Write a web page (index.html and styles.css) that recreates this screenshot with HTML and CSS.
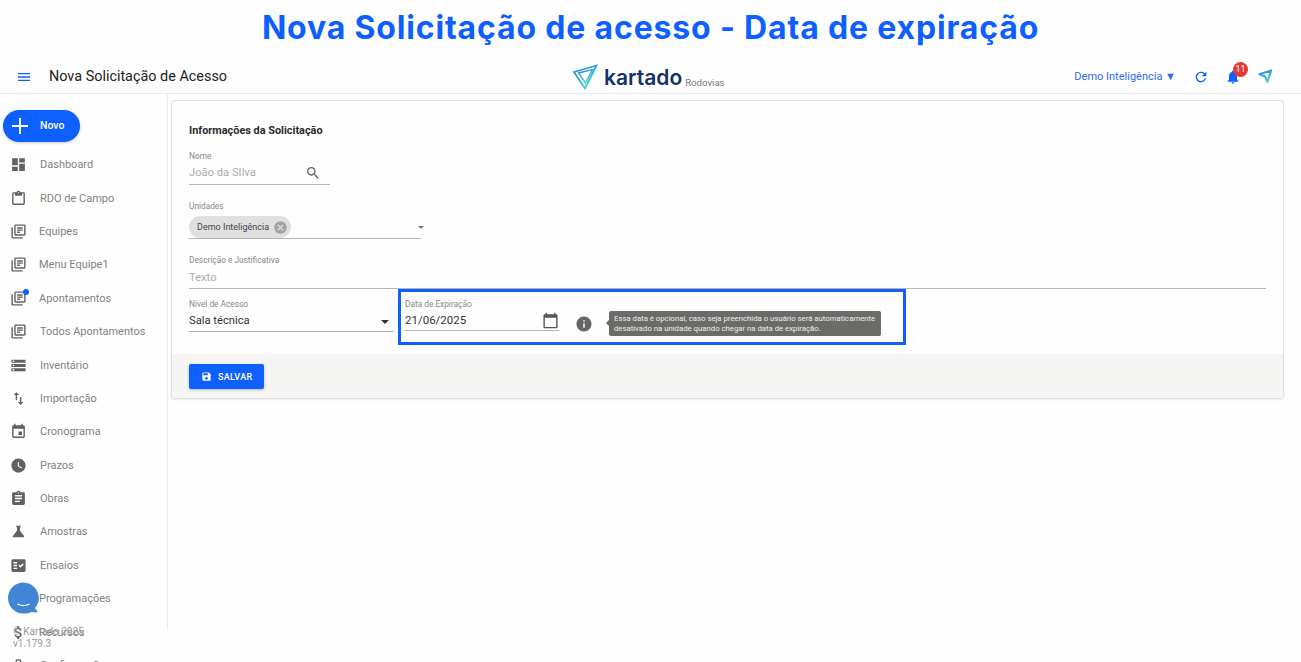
FILE: index.html
```html
<!DOCTYPE html>
<html lang="pt-BR">
<head>
  <meta charset="UTF-8">
  <meta name="viewport" content="width=device-width, initial-scale=1.0">
  <title>Nova Solicitação de Acesso</title>
  <link rel="stylesheet" href="styles.css">
</head>
<body>
  <svg class="sprite" xmlns="http://www.w3.org/2000/svg">
    <symbol id="i-menu" viewBox="0 0 24 24"><path d="M3 18h18v-2H3v2zm0-5h18v-2H3v2zm0-7v2h18V6H3z"/></symbol>
    <symbol id="i-dash" viewBox="0 0 24 24"><path d="M3 13h8V3H3v10zm0 8h8v-6H3v6zm10 0h8V11h-8v10zm0-18v6h8V3h-8z"/></symbol>
    <symbol id="i-clip" viewBox="0 0 24 24"><path d="M19 3h-4.18C14.4 1.84 13.3 1 12 1s-2.4.84-2.82 2H5c-1.1 0-2 .9-2 2v14c0 1.1.9 2 2 2h14c1.1 0 2-.9 2-2V5c0-1.1-.9-2-2-2zm-7 0c.55 0 1 .45 1 1s-.45 1-1 1-1-.45-1-1 .45-1 1-1zm7 16H5V5h2v3h10V5h2v14z"/></symbol>
    <symbol id="i-books" viewBox="0 0 24 24"><path d="M4 6H2v14c0 1.1.9 2 2 2h14v-2H4V6zm16-4H8c-1.1 0-2 .9-2 2v12c0 1.1.9 2 2 2h12c1.1 0 2-.9 2-2V4c0-1.1-.9-2-2-2zm0 14H8V4h12v12zM10 9h8v2h-8zm0 3h4v2h-4zm0-6h8v2h-8z"/></symbol>
    <symbol id="i-list" viewBox="0 0 24 24"><path d="M2 20h20v-4H2v4zm2-3h2v2H4v-2zM2 4v4h20V4H2zm4 3H4V5h2v2zm-4 7h20v-4H2v4zm2-3h2v2H4v-2z"/></symbol>
    <symbol id="i-import" viewBox="0 0 24 24"><path d="M9 3L5 6.99h3V14h2V6.99h3L9 3zm7 14.01V10h-2v7.01h-3L15 21l4-3.99h-3z"/></symbol>
    <symbol id="i-event" viewBox="0 0 24 24"><path d="M17 12h-5v5h5v-5zM16 1v2H8V1H6v2H5c-1.11 0-1.99.9-1.99 2L3 19c0 1.1.89 2 2 2h14c1.1 0 2-.9 2-2V5c0-1.1-.9-2-2-2h-1V1h-2zm3 18H5V8h14v11z"/></symbol>
    <symbol id="i-clock" viewBox="0 0 24 24"><path d="M12 2C6.5 2 2 6.5 2 12s4.5 10 10 10 10-4.5 10-10S17.5 2 12 2zm4.2 14.2L11 13V7h1.5v5.2l4.5 2.7-.8 1.3z"/></symbol>
    <symbol id="i-assign" viewBox="0 0 24 24"><path d="M19 3h-4.18C14.4 1.84 13.3 1 12 1c-1.3 0-2.4.84-2.82 2H5c-1.1 0-2 .9-2 2v14c0 1.1.9 2 2 2h14c1.1 0 2-.9 2-2V5c0-1.1-.9-2-2-2zm-7 0c.55 0 1 .45 1 1s-.45 1-1 1-1-.45-1-1 .45-1 1-1zm2 14H7v-2h7v2zm3-4H7v-2h10v2zm0-4H7V7h10v2z"/></symbol>
    <symbol id="i-flask" viewBox="0 0 24 24"><path d="M19.8 18.4L14 10.67V6.5l1.35-1.69c.26-.33.03-.81-.39-.81H9.04c-.42 0-.65.48-.39.81L10 6.5v4.17L4.2 18.4c-.49.66-.02 1.6.8 1.6h14c.82 0 1.29-.94.8-1.6z"/></symbol>
    <symbol id="i-check" viewBox="0 0 24 24"><path d="M20 3H4c-1.1 0-2 .9-2 2v14c0 1.1.9 2 2 2h16c1.1 0 2-.9 2-2V5c0-1.1-.9-2-2-2zM10 17H5v-2h5v2zm0-4H5v-2h5v2zm0-4H5V7h5v2zm4.82 6L12 12.16l1.41-1.41 1.41 1.42L17.99 9l1.42 1.42L14.82 15z"/></symbol>
    <symbol id="i-money" viewBox="0 0 24 24"><path d="M11.8 10.9c-2.27-.59-3-1.2-3-2.15 0-1.09 1.01-1.85 2.7-1.85 1.78 0 2.44.85 2.5 2.1h2.21c-.07-1.72-1.12-3.3-3.21-3.81V3h-3v2.16c-1.94.42-3.5 1.68-3.5 3.61 0 2.31 1.91 3.46 4.7 4.13 2.5.6 3 1.48 3 2.41 0 .69-.49 1.79-2.7 1.79-2.06 0-2.87-.92-2.98-2.1h-2.2c.12 2.19 1.76 3.42 3.68 3.83V21h3v-2.15c1.95-.37 3.5-1.5 3.5-3.55 0-2.84-2.43-3.81-4.7-4.4z"/></symbol>
    <symbol id="i-gear" viewBox="0 0 24 24"><path d="M20 7h-4V5c0-1.1-.9-2-2-2h-4c-1.1 0-2 .9-2 2v2H4c-1.1 0-2 .9-2 2v10c0 1.1.9 2 2 2h16c1.1 0 2-.9 2-2V9c0-1.1-.9-2-2-2zm-6 0h-4V5h4v2z"/></symbol>
  </svg>

  <h1 class="banner">Nova Solicitação de acesso - Data de expiração</h1>

  <header class="topbar">
    <div class="topbar-left">
      <svg class="icon menu-icon"><use href="#i-menu"/></svg>
      <span class="page-title">Nova Solicitação de Acesso</span>
    </div>
    <div class="brand">
      <svg class="brand-mark" viewBox="0 0 26 26" fill="none">
        <defs>
          <linearGradient id="markgrad" x1="0" y1="0" x2="0.6" y2="1">
            <stop offset="0" stop-color="#1f7fe0"/>
            <stop offset="1" stop-color="#45d6cf"/>
          </linearGradient>
        </defs>
        <path d="M2 8 24.500 1.500 13 24.500Z" stroke="url(#markgrad)" stroke-width="1.800"/>
        <path d="M6.500 9 20.500 5.500 13.500 19Z" stroke="url(#markgrad)" stroke-width="1.400"/>
      </svg>
      <span class="brand-name">kartado</span>
      <span class="brand-sub">Rodovias</span>
    </div>
    <div class="topbar-right">
      <span class="unit-select">Demo Inteligência ▼</span>
      <svg class="icon blue" viewBox="0 0 24 24"><path d="M17.650 6.350C16.200 4.900 14.210 4 12 4c-4.420 0-7.990 3.580-7.990 8s3.570 8 7.990 8c3.730 0 6.840-2.550 7.730-6h-2.080c-.82 2.330-3.040 4-5.650 4-3.310 0-6-2.690-6-6s2.690-6 6-6c1.660 0 3.140.69 4.220 1.780L13 11h7V4l-2.350 2.350z"/></svg>
      <div class="bell">
        <svg class="icon blue" viewBox="0 0 24 24"><path d="M12 22c1.100 0 2-.9 2-2h-4c0 1.100.9 2 2 2zm6-6v-5c0-3.070-1.630-5.640-4.500-6.320V4c0-.83-.67-1.500-1.500-1.500s-1.500.67-1.500 1.500v.68C7.640 5.360 6 7.920 6 11v5l-2 2v1h16v-1l-2-2z"/></svg>
        <span class="bell-count">11</span>
      </div>
      <svg class="send-icon" viewBox="0 0 16 16" fill="none"><path d="M1.500 5.500 14 1.500 10 14 7.500 8Z" stroke="url(#markgrad)" stroke-width="2.200" stroke-linejoin="round"/></svg>
    </div>
  </header>

  <div class="app">
    <aside class="sidebar">
      <button class="new-btn">
        <svg class="new-plus" viewBox="0 0 16 16"><path d="M7 0h2v7h7v2H9v7H7V9H0V7h7z"/></svg>
        <span>Novo</span>
      </button>
      <nav class="side-nav">
        <a class="side-item"><svg class="icon"><use href="#i-dash"/></svg><span>Dashboard</span></a>
        <a class="side-item"><svg class="icon"><use href="#i-clip"/></svg><span>RDO de Campo</span></a>
        <a class="side-item tight"><svg class="icon"><use href="#i-books"/></svg><span>Equipes</span></a>
        <a class="side-item tight"><svg class="icon"><use href="#i-books"/></svg><span>Menu Equipe1</span></a>
        <a class="side-item tight"><svg class="icon"><use href="#i-books"/></svg><i class="side-dot"></i><span>Apontamentos</span></a>
        <a class="side-item"><svg class="icon"><use href="#i-books"/></svg><span>Todos Apontamentos</span></a>
        <a class="side-item"><svg class="icon"><use href="#i-list"/></svg><span>Inventário</span></a>
        <a class="side-item"><svg class="icon"><use href="#i-import"/></svg><span>Importação</span></a>
        <a class="side-item"><svg class="icon"><use href="#i-event"/></svg><span>Cronograma</span></a>
        <a class="side-item"><svg class="icon"><use href="#i-clock"/></svg><span>Prazos</span></a>
        <a class="side-item"><svg class="icon"><use href="#i-assign"/></svg><span>Obras</span></a>
        <a class="side-item"><svg class="icon"><use href="#i-flask"/></svg><span>Amostras</span></a>
        <a class="side-item"><svg class="icon"><use href="#i-check"/></svg><span>Ensaios</span></a>
        <a class="side-item tight"><svg class="icon"><use href="#i-books"/></svg><span>Programações</span></a>
        <a class="side-item tight"><svg class="icon"><use href="#i-money"/></svg><span>Recursos</span></a>
        <a class="side-item"><svg class="icon"><use href="#i-gear"/></svg><span>Configurações</span></a>
      </nav>
      <div class="side-footer">
        <div>© Kartado 2025</div>
        <div>v1.179.3</div>
      </div>
      <svg class="chat-bubble" viewBox="0 0 32 33">
        <path d="M15.500 0.500a15.500 15.500 0 1 0 0 31c3 0 6-.5 8-1.500l6.500.5-3-4.500a15.500 15.500 0 0 0-11.500-25.500z" fill="#4285d4"/>
        <path d="M9.500 22c3.500 2 8.500 2 12 0" stroke="#fff" stroke-width="1.200" fill="none"/>
      </svg>
    </aside>

    <main class="content">
      <section class="card">
        <div class="card-body">
          <h2 class="card-title">Informações da Solicitação</h2>

          <div class="field field-name">
            <label class="field-label">Nome</label>
            <div class="field-value muted">
              <span>João da SIlva</span>
              <svg class="icon search-icon" viewBox="0 0 24 24"><path d="M15.500 14h-.79l-.28-.27C15.410 12.590 16 11.110 16 9.500 16 5.910 13.090 3 9.500 3S3 5.910 3 9.500 5.910 16 9.500 16c1.610 0 3.090-.59 4.230-1.570l.27.28v.79l5 4.990L20.490 19l-4.990-5zm-6 0C7.010 14 5 11.990 5 9.500S7.010 5 9.500 5 14 7.010 14 9.500 11.990 14 9.500 14z"/></svg>
            </div>
          </div>

          <div class="field field-units">
            <label class="field-label">Unidades</label>
            <div class="field-value chips">
              <span class="chip">Demo Inteligência
                <svg class="chip-x" viewBox="0 0 24 24"><path d="M12 2C6.470 2 2 6.470 2 12s4.470 10 10 10 10-4.470 10-10S17.530 2 12 2zm5 13.590L15.590 17 12 13.410 8.410 17 7 15.590 10.590 12 7 8.410 8.410 7 12 10.590 15.590 7 17 8.410 13.410 12 17 15.590z"/></svg>
              </span>
              <i class="caret"></i>
            </div>
          </div>

          <div class="field field-desc">
            <label class="field-label">Descrição e Justificativa</label>
            <div class="field-value muted">Texto</div>
          </div>

          <div class="access-row">
            <div class="field field-level">
              <label class="field-label">Nível de Acesso</label>
              <div class="field-value">
                <span>Sala técnica</span>
                <i class="caret dark"></i>
              </div>
            </div>
            <div class="expiry-box">
              <div class="field field-date">
                <label class="field-label">Data de Expiração</label>
                <div class="field-value">
                  <span class="date-text">21/06/2025</span>
                  <svg class="cal-icon" viewBox="0 0 24 24"><path d="M20 3h-1V1h-2v2H7V1H5v2H4c-1.100 0-2 .9-2 2v16c0 1.100.9 2 2 2h16c1.100 0 2-.9 2-2V5c0-1.100-.9-2-2-2zm0 18H4V8h16v13z"/></svg>
                </div>
              </div>
              <svg class="info-icon" viewBox="0 0 24 24"><path d="M12 2C6.480 2 2 6.480 2 12s4.480 10 10 10 10-4.480 10-10S17.520 2 12 2zm1 15h-2v-6h2v6zm0-8h-2V7h2v2z"/></svg>
              <div class="hint">Essa data é opcional, caso seja preenchida o usuário será automaticamente desativado na unidade quando chegar na data de expiração.</div>
            </div>
          </div>
        </div>

        <div class="card-actions">
          <button class="save-btn">
            <svg class="save-icon" viewBox="0 0 24 24"><path d="M17 3H5c-1.110 0-2 .9-2 2v14c0 1.100.89 2 2 2h14c1.100 0 2-.9 2-2V7l-4-4zm-5 16c-1.660 0-3-1.340-3-3s1.340-3 3-3 3 1.340 3 3-1.340 3-3 3zm3-10H5V5h10v4z"/></svg>
            SALVAR
          </button>
        </div>
      </section>
    </main>
  </div>
</body>
</html>
```

FILE: styles.css
```css
html, body {
  height: 100%;
}
body {
  margin: 0;
  font-family: Roboto, "Liberation Sans", sans-serif;
  background-color: #fefefe;
  color: #333;
  overflow: hidden;
}
.sprite {
  display: none;
}
.icon {
  width: 18px;
  height: 18px;
  fill: #616161;
  flex-shrink: 0;
}
.icon.blue {
  fill: #0d5fff;
  width: 16px;
  height: 16px;
}

.banner {
  margin: 0;
  height: 58px;
  padding-bottom: 3px;
  box-sizing: border-box;
  display: flex;
  align-items: center;
  justify-content: center;
  font-family: Inter, sans-serif;
  font-size: 32px;
  font-weight: 700;
  letter-spacing: 0.83px;
  color: #0d5fff;
}

.topbar {
  position: relative;
  height: 36px;
  padding: 2px 28px 0 16px;
  box-sizing: border-box;
  border-bottom: 1px solid #e8e8e8;
  display: flex;
  align-items: center;
  justify-content: space-between;
}
.topbar-left {
  display: flex;
  align-items: center;
  gap: 17px;
}
.menu-icon {
  width: 16px;
  height: 16px;
  fill: #0d5fff;
}
.page-title {
  font-size: 14.400px;
  color: #222;
}
.brand {
  position: absolute;
  left: 572px;
  top: 6px;
  display: flex;
  align-items: flex-end;
  height: 26px;
}
.brand-mark {
  width: 26px;
  height: 26px;
}
.brand-name {
  font-family: Inter, sans-serif;
  font-size: 21px;
  font-weight: 600;
  line-height: 24px;
  color: #14306b;
  margin-left: 6px;
}
.brand-sub {
  font-size: 9.600px;
  color: #777;
  margin-left: 3px;
  line-height: 15px;
}
.topbar-right {
  display: flex;
  align-items: center;
}
.unit-select {
  font-size: 11px;
  color: #2f6cf0;
  margin-right: 17px;
}
.bell {
  position: relative;
  display: flex;
  margin-left: 16px;
  margin-right: 17px;
}
.bell-count {
  position: absolute;
  top: -7px;
  left: 8px;
  width: 15px;
  height: 15px;
  border-radius: 50%;
  background-color: #e53935;
  color: white;
  font-size: 9px;
  text-align: center;
  line-height: 15px;
}
.send-icon {
  width: 15px;
  height: 15px;
}

.app {
  display: flex;
  height: calc(100% - 94px);
}

.sidebar {
  position: relative;
  width: 168px;
  flex-shrink: 0;
  box-sizing: border-box;
  overflow: hidden;
  padding: 16px 0 0 3px;
}
.sidebar::after {
  content: "";
  position: absolute;
  top: 0;
  right: 0;
  height: 536px;
  border-right: 1px solid #e8e8e8;
}
.new-btn {
  display: flex;
  align-items: center;
  gap: 12px;
  width: 77px;
  height: 32px;
  padding: 0 0 2px 9px;
  border: none;
  border-radius: 16px;
  background-color: #0d5fff;
  color: white;
  font-family: inherit;
  font-size: 10.500px;
  font-weight: 500;
  box-shadow: 0 1px 3px rgba(0, 0, 0, 0.2);
}
.new-plus {
  width: 16px;
  height: 16px;
  margin-top: 2px;
  fill: white;
}
.side-nav {
  margin-top: 6px;
}
.side-item {
  position: relative;
  display: flex;
  align-items: center;
  gap: 13px;
  height: 33.400px;
  padding-left: 7px;
  font-size: 11px;
  color: #828282;
  white-space: nowrap;
}
.side-item .icon {
  width: 17px;
  height: 17px;
}
.side-item.tight {
  gap: 12px;
}
.side-dot {
  position: absolute;
  left: 20px;
  top: 7px;
  width: 6px;
  height: 6px;
  border-radius: 50%;
  background-color: #0d5fff;
}
.side-footer {
  position: absolute;
  left: 0;
  top: 532px;
  width: 168px;
  box-sizing: border-box;
  padding-left: 13px;
  font-size: 10px;
  line-height: 12px;
  color: #999;
}
.chat-bubble {
  position: absolute;
  left: 8px;
  top: 488px;
  width: 32px;
  height: 33px;
}

.content {
  flex: 1;
  padding: 6px 17px 0 3px;
}
.card {
  border: 1px solid #e0e0e0;
  border-radius: 3px;
  box-shadow: 0 1px 2px rgba(0, 0, 0, 0.08);
}
.card-body {
  padding: 23px 17px 8px;
  height: 253px;
  box-sizing: border-box;
}
.card-title {
  margin: 0;
  font-size: 10.900px;
  font-weight: 700;
  line-height: 14px;
  color: #2b2b2b;
}
.field-label {
  display: block;
  font-size: 8.300px;
  line-height: 10px;
  color: #888;
}
.field-value {
  display: flex;
  align-items: center;
  justify-content: space-between;
  border-bottom: 1px solid #b5b5b5;
  font-size: 11.200px;
  color: #333;
}
.field-value.muted {
  color: #ababab;
}
.field-name {
  width: 141px;
  margin-top: 13px;
}
.field-name .field-value {
  height: 23px;
  padding-right: 9px;
}
.search-icon {
  width: 16px;
  height: 16px;
}
.field-units {
  width: 232px;
  margin-top: 16px;
}
.field-units .field-value {
  height: 22px;
  padding-top: 5px;
  align-items: flex-start;
}
.chip {
  display: flex;
  align-items: center;
  gap: 4px;
  height: 22px;
  padding: 0 3px 0 8px;
  border-radius: 11px;
  background-color: #e0e0e0;
  font-size: 9px;
  color: #444;
}
.chip-x {
  width: 15px;
  height: 15px;
  fill: #a3a3a3;
}
.caret {
  width: 0;
  height: 0;
  margin: 10px -3px 0 0;
  border-left: 3.500px solid transparent;
  border-right: 3.500px solid transparent;
  border-top: 3.500px solid #777;
}
.caret.dark {
  margin: 4px 5px 0 0;
  border-left-width: 4px;
  border-right-width: 4px;
  border-top: 4px solid #333;
}
.field-desc {
  margin-top: 16px;
}
.field-desc .field-value {
  height: 22px;
  padding-top: 1px;
}
.access-row {
  display: flex;
  gap: 4px;
}
.field-level {
  width: 205px;
  padding-top: 10px;
}
.field-level .field-value {
  height: 22px;
}
.expiry-box {
  display: flex;
  align-items: flex-start;
  width: 508px;
  height: 56px;
  box-sizing: border-box;
  border: 3px solid #0d5fff;
  padding: 7px 4px 0;
}
.field-date {
  width: 154px;
}
.field-date .field-value {
  height: 22px;
  padding-top: 1px;
  box-sizing: border-box;
  font-size: 11.500px;
  color: #333;
}
.cal-icon {
  width: 17px;
  height: 17px;
  fill: #555;
}
.info-icon {
  width: 18px;
  height: 18px;
  fill: #666;
  margin: 16px 0 0 16px;
  flex-shrink: 0;
}
.hint {
  position: relative;
  width: 272px;
  height: 25px;
  box-sizing: border-box;
  margin: 12px 0 0 16px;
  padding: 3px 5px;
  border-radius: 2px;
  background-color: #6b6b68;
  color: #eee;
  font-size: 7.750px;
  line-height: 10px;
}
.hint::before {
  content: "";
  position: absolute;
  left: -3px;
  top: 9px;
  border-top: 3px solid transparent;
  border-bottom: 3px solid transparent;
  border-right: 3px solid #6b6b68;
}
.card-actions {
  padding: 10px 17px 9px;
  background-color: #f5f5f4;
}
.save-btn {
  display: flex;
  align-items: center;
  gap: 6px;
  width: 75px;
  height: 25px;
  padding: 0 0 0 12px;
  border: none;
  border-radius: 2px;
  background-color: #0d5fff;
  color: white;
  font-family: inherit;
  font-size: 9px;
  font-weight: 500;
  letter-spacing: 0.3px;
  box-shadow: 0 1px 3px rgba(0, 0, 0, 0.25);
}
.save-icon {
  width: 11px;
  height: 11px;
  fill: white;
}
```
